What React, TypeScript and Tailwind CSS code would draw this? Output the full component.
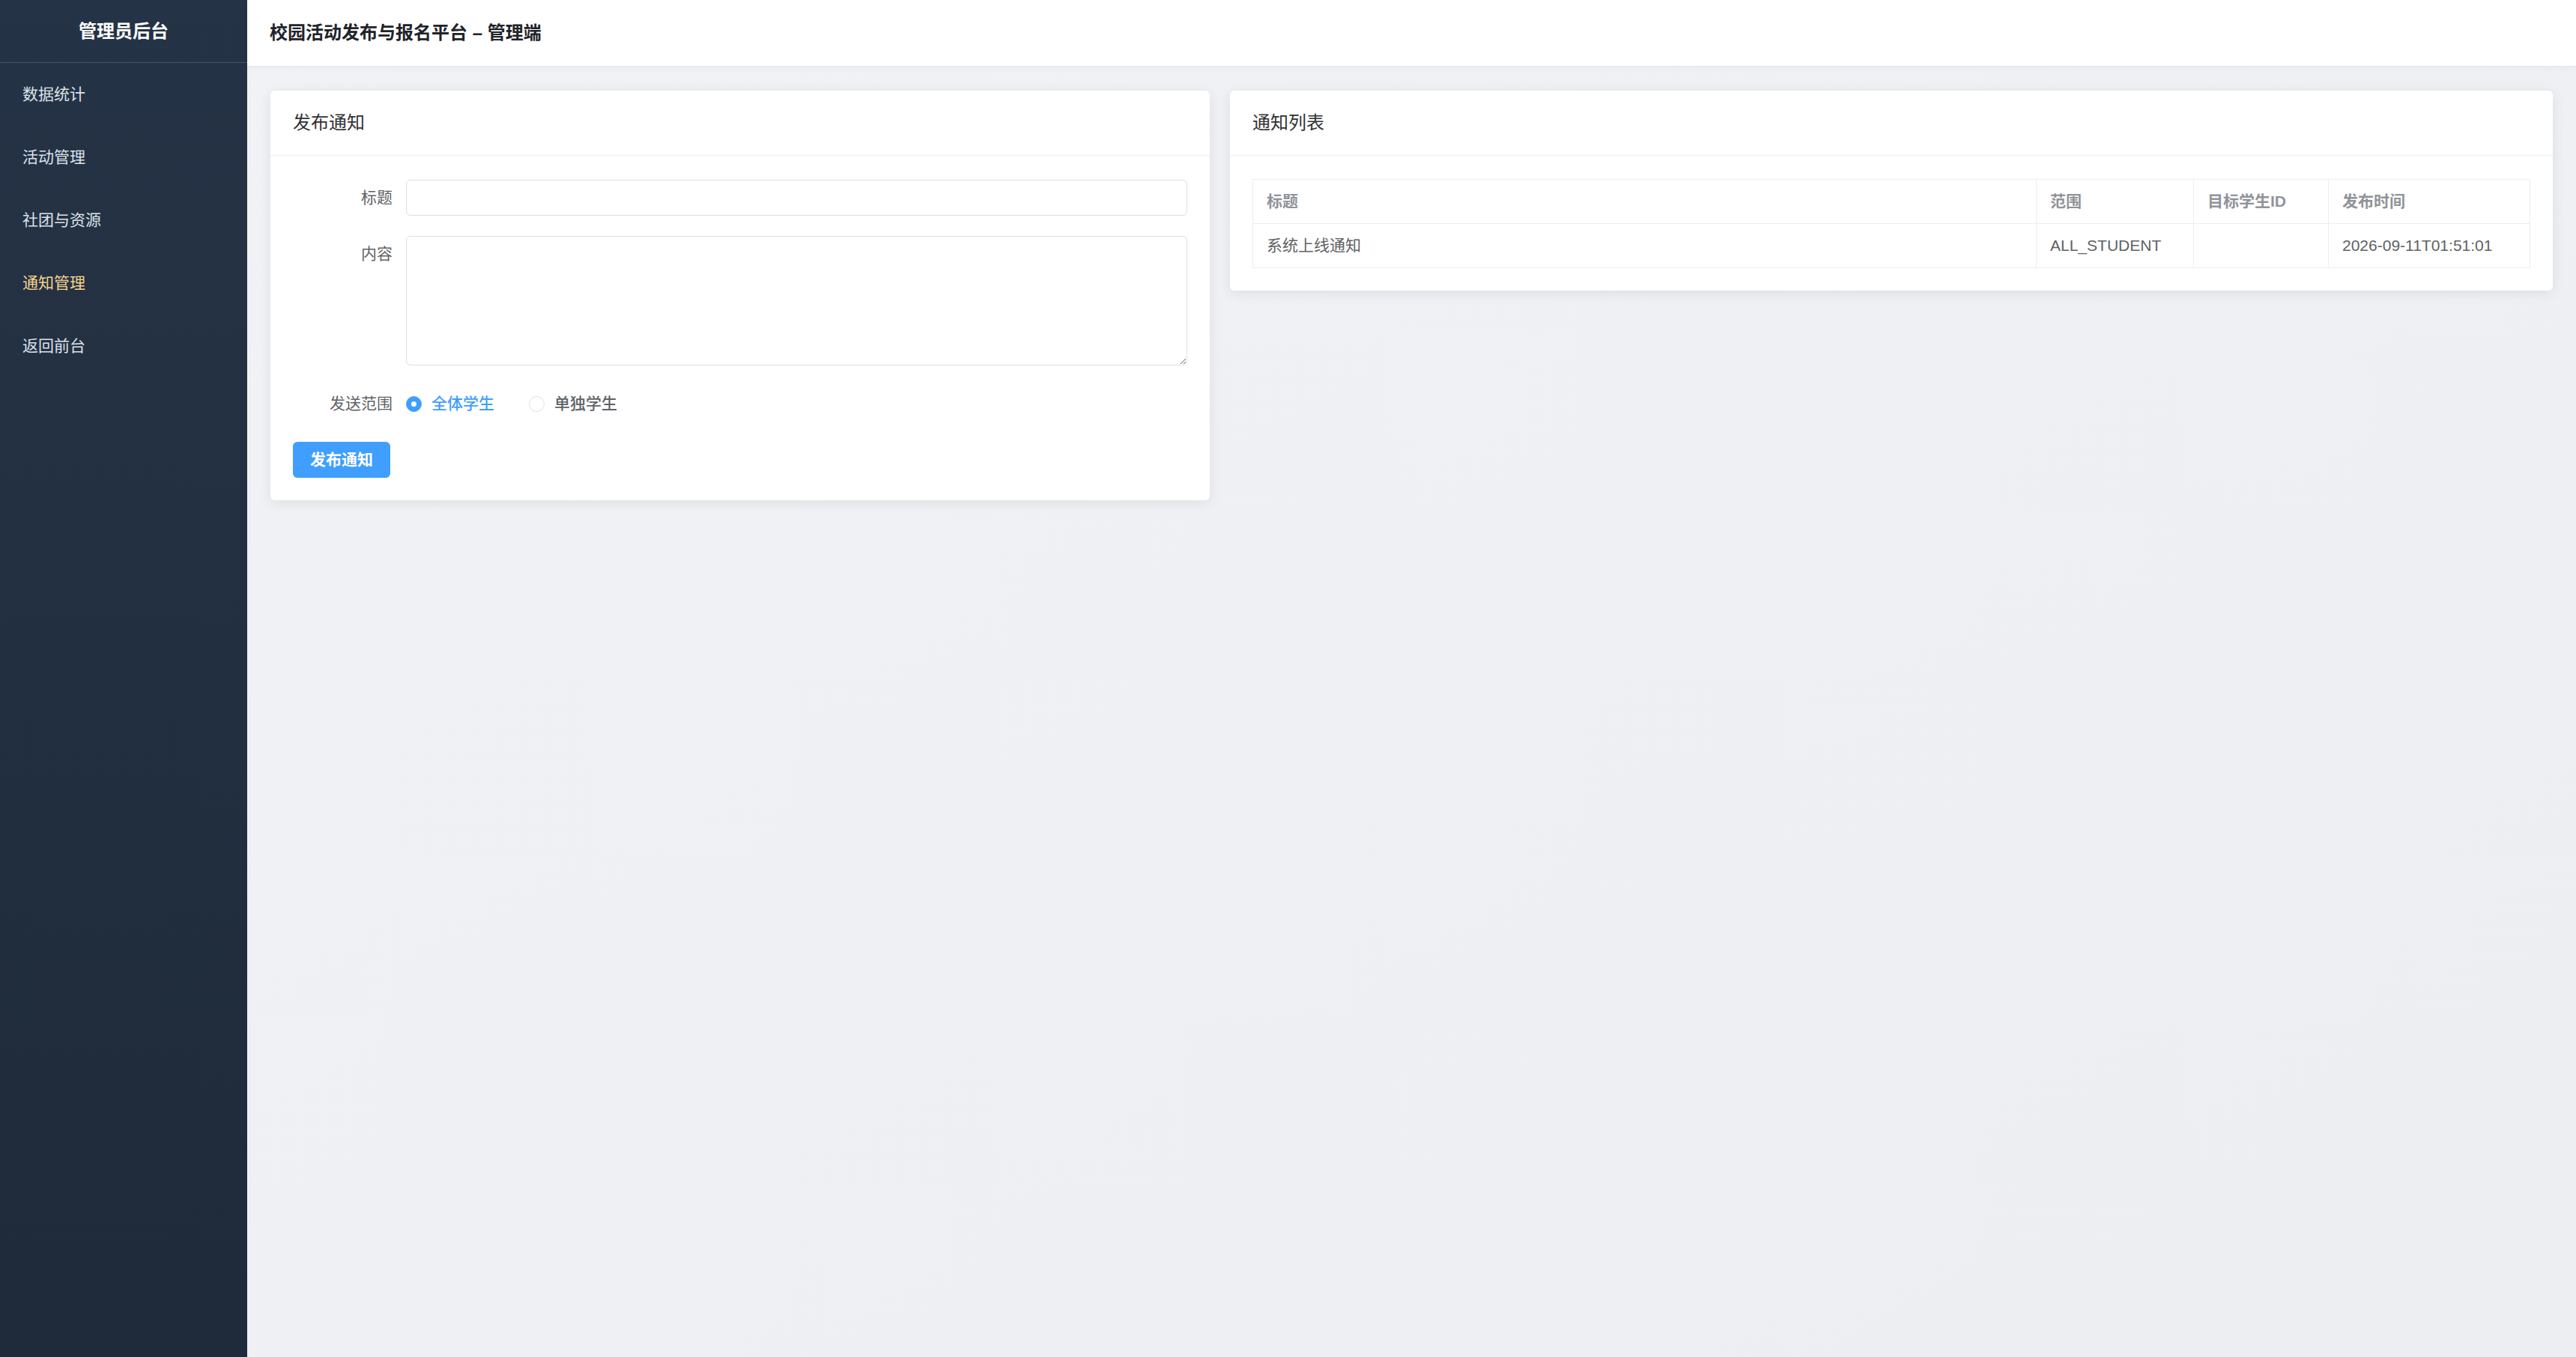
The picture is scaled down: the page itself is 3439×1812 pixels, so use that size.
import React, { useState } from 'react'

interface Notice {
  id: number
  title: string
  scope: string
  targetStudentId: string
  publishedAt: string
}

const menuItems = ['数据统计', '活动管理', '社团与资源', '通知管理', '返回前台']

const notices: Notice[] = [
  {
    id: 1,
    title: '系统上线通知',
    scope: 'ALL_STUDENT',
    targetStudentId: '',
    publishedAt: '2026-09-11T01:51:01',
  },
]

const font = 'font-["Liberation_Sans","Noto_Sans_CJK_SC",sans-serif]'

const Radio: React.FC<{ checked: boolean; label: string; onClick: () => void }> = ({ checked, label, onClick }) => (
  <label className="flex items-center cursor-pointer" onClick={onClick}>
    {checked ? (
      <span className="w-[21px] h-[21px] rounded-full bg-[#409eff] border border-[#409eff] flex items-center justify-center">
        <span className="w-[7px] h-[7px] rounded-full bg-white" />
      </span>
    ) : (
      <span className="w-[21px] h-[21px] rounded-full bg-white border border-[#dcdfe6]" />
    )}
    <span className={`pl-[13px] text-[21px] font-medium ${checked ? 'text-[#409eff]' : 'text-[#606266]'}`}>{label}</span>
  </label>
)

const App: React.FC = () => {
  const [active] = useState('通知管理')
  const [scope, setScope] = useState<'ALL' | 'ONE'>('ALL')
  const [title, setTitle] = useState('')
  const [content, setContent] = useState('')

  return (
    <div className={`flex min-h-screen ${font}`}>
      {/* 侧边栏 */}
      <aside className="w-[330px] shrink-0 bg-gradient-to-b from-[#253346] to-[#1f2b3a]">
        <div className="h-[84px] flex items-center justify-center border-b border-[#4a5464] text-white text-[24px] font-bold">
          管理员后台
        </div>
        <nav>
          {menuItems.map((item) => (
            <div
              key={item}
              className={`h-[84px] flex items-center pl-[30px] text-[21px] cursor-pointer ${
                item === active ? 'text-[#f4d38b]' : 'text-[#dde2e9]'
              }`}
            >
              {item}
            </div>
          ))}
        </nav>
      </aside>

      <div className="flex-1 flex flex-col bg-gradient-to-br from-[#f1f2f5] to-[#eceef2]">
        {/* 顶栏 */}
        <header className="h-[89px] shrink-0 bg-white border-b border-[#e4e7ec] shadow-[0_2px_8px_rgba(0,0,0,0.03)] flex items-center px-[30px] text-[24px] font-bold text-[#1f2329]">
          校园活动发布与报名平台 – 管理端
        </header>

        <main className="flex items-start gap-[27px] px-[31px] pt-[32px]">
          {/* 发布通知 */}
          <section className="w-[1254px] shrink-0 bg-white rounded-[6px] shadow-[0_3px_18px_rgba(0,0,0,0.08)]">
            <div className="h-[87px] flex items-center px-[30px] border-b border-[#ebeef5] text-[24px] text-[#303133]">
              发布通知
            </div>
            <div className="px-[30px] pt-[32px] pb-[30px]">
              <div className="flex mb-[27px]">
                <div className="w-[151px] shrink-0 pr-[18px] text-right text-[21px] leading-[48px] text-[#606266]">标题</div>
                <input
                  value={title}
                  onChange={(e) => setTitle(e.target.value)}
                  className="flex-1 h-[48px] px-[22px] text-[21px] border border-[#dcdfe6] rounded-[6px] outline-none"
                />
              </div>
              <div className="flex mb-[27px]">
                <div className="w-[151px] shrink-0 pr-[18px] text-right text-[21px] leading-[48px] text-[#606266]">内容</div>
                <textarea
                  value={content}
                  onChange={(e) => setContent(e.target.value)}
                  className="flex-1 h-[173px] px-[22px] py-[8px] text-[21px] border border-[#dcdfe6] rounded-[6px] outline-none block"
                />
              </div>
              <div className="flex items-center h-[48px] mb-[27px]">
                <div className="w-[151px] shrink-0 pr-[18px] text-right text-[21px] text-[#606266]">发送范围</div>
                <div className="flex items-center gap-[46px]">
                  <Radio checked={scope === 'ALL'} label="全体学生" onClick={() => setScope('ALL')} />
                  <Radio checked={scope === 'ONE'} label="单独学生" onClick={() => setScope('ONE')} />
                </div>
              </div>
              <button className="h-[48px] px-[23px] bg-[#409eff] hover:bg-[#66b1ff] rounded-[6px] text-white text-[21px] font-semibold">
                发布通知
              </button>
            </div>
          </section>

          {/* 通知列表 */}
          <section className="flex-1 bg-white rounded-[6px] shadow-[0_3px_18px_rgba(0,0,0,0.08)]">
            <div className="h-[87px] flex items-center px-[30px] border-b border-[#ebeef5] text-[24px] text-[#303133]">
              通知列表
            </div>
            <div className="px-[30px] pt-[31px] pb-[30px]">
              <table className="w-full table-fixed border-collapse border border-[#ebeef5] text-[21px]">
                <colgroup>
                  <col />
                  <col className="w-[210px]" />
                  <col className="w-[180px]" />
                  <col className="w-[269px]" />
                </colgroup>
                <thead>
                  <tr className="h-[59px]">
                    {['标题', '范围', '目标学生ID', '发布时间'].map((h) => (
                      <th key={h} className="border border-[#ebeef5] px-[18px] text-left font-semibold text-[#909399]">
                        {h}
                      </th>
                    ))}
                  </tr>
                </thead>
                <tbody>
                  {notices.map((n) => (
                    <tr key={n.id} className="h-[59px] text-[#606266]">
                      <td className="border border-[#ebeef5] px-[18px]">{n.title}</td>
                      <td className="border border-[#ebeef5] px-[18px]">{n.scope}</td>
                      <td className="border border-[#ebeef5] px-[18px]">{n.targetStudentId}</td>
                      <td className="border border-[#ebeef5] px-[18px]">{n.publishedAt}</td>
                    </tr>
                  ))}
                </tbody>
              </table>
            </div>
          </section>
        </main>
      </div>
    </div>
  )
}

export default App
